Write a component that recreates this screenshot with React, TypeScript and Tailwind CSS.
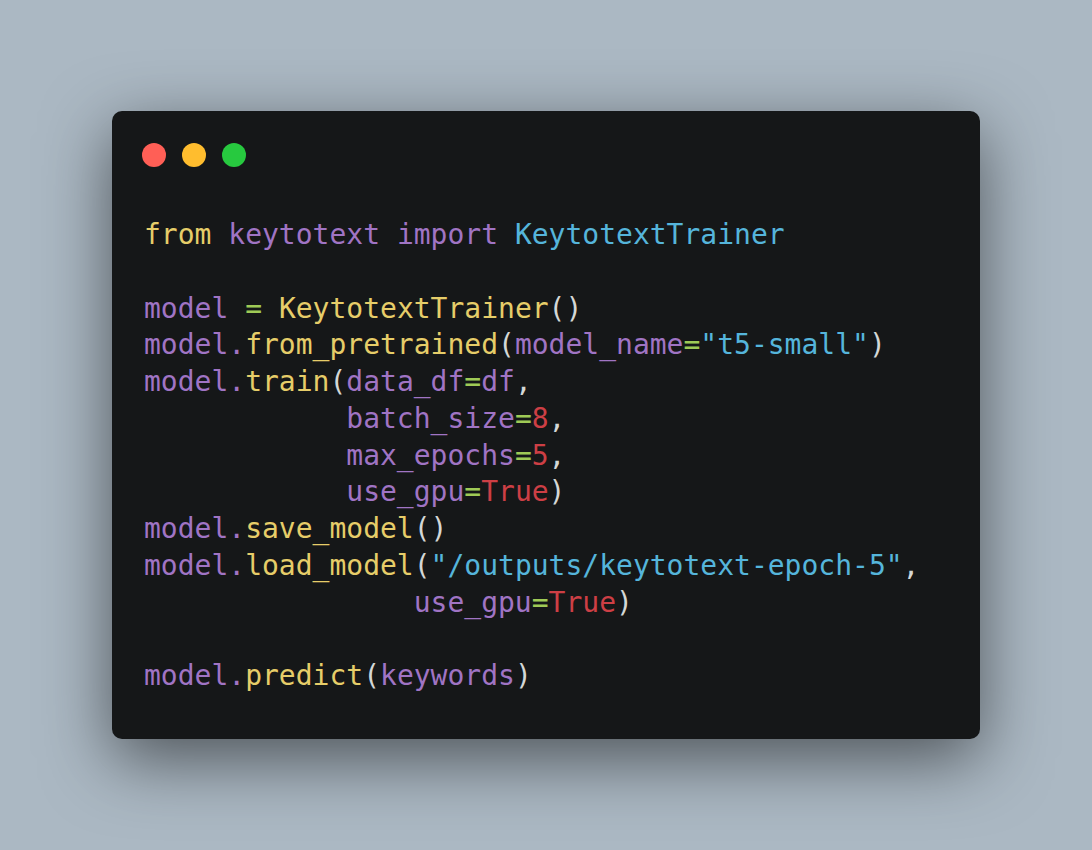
import React from 'react';

type Tok = [string, string];

const Y = 'text-[#e6cd69]';
const P = 'text-[#a074c4]';
const B = 'text-[#55b5db]';
const G = 'text-[#9fca56]';
const R = 'text-[#cd3f45]';
const W = 'text-[#d4d7d6]';

const lines: Tok[][] = [
  [['from', Y], [' ', W], ['keytotext', P], [' ', W], ['import', P], [' ', W], ['KeytotextTrainer', B]],
  [],
  [['model', P], [' ', W], ['=', G], [' ', W], ['KeytotextTrainer', Y], ['()', W]],
  [['model', P], ['.', P], ['from_pretrained', Y], ['(', W], ['model_name', P], ['=', G], ['"t5-small"', B], [')', W]],
  [['model', P], ['.', P], ['train', Y], ['(', W], ['data_df', P], ['=', G], ['df', P], [',', W]],
  [['            ', W], ['batch_size', P], ['=', G], ['8', R], [',', W]],
  [['            ', W], ['max_epochs', P], ['=', G], ['5', R], [',', W]],
  [['            ', W], ['use_gpu', P], ['=', G], ['True', R], [')', W]],
  [['model', P], ['.', P], ['save_model', Y], ['()', W]],
  [['model', P], ['.', P], ['load_model', Y], ['(', W], ['"/outputs/keytotext-epoch-5"', B], [',', W]],
  [['                ', W], ['use_gpu', P], ['=', G], ['True', R], [')', W]],
  [],
  [['model', P], ['.', P], ['predict', Y], ['(', W], ['keywords', P], [')', W]],
];

export default function App() {
  return (
    <div className="flex h-screen w-full items-center justify-center bg-[#abb8c3]">
      <div className="w-[868px] rounded-[10px] bg-[#151718] pt-8 pb-[44px] shadow-[0_20px_68px_rgba(0,0,0,0.55)]">
        <div className="flex gap-4 pl-[30px]">
          <span className="h-6 w-6 rounded-full bg-[#ff5f56]" />
          <span className="h-6 w-6 rounded-full bg-[#ffbd2e]" />
          <span className="h-6 w-6 rounded-full bg-[#27c93f]" />
        </div>
        <pre className="mt-[50px] px-8 font-['DejaVu_Sans_Mono',monospace] text-[28px] leading-[36.75px]">
          {lines.map((line, i) => (
            <div key={i} className="min-h-[36.75px] whitespace-pre">
              {line.map(([t, c], j) => (
                <span key={j} className={c}>
                  {t}
                </span>
              ))}
            </div>
          ))}
        </pre>
      </div>
    </div>
  );
}
